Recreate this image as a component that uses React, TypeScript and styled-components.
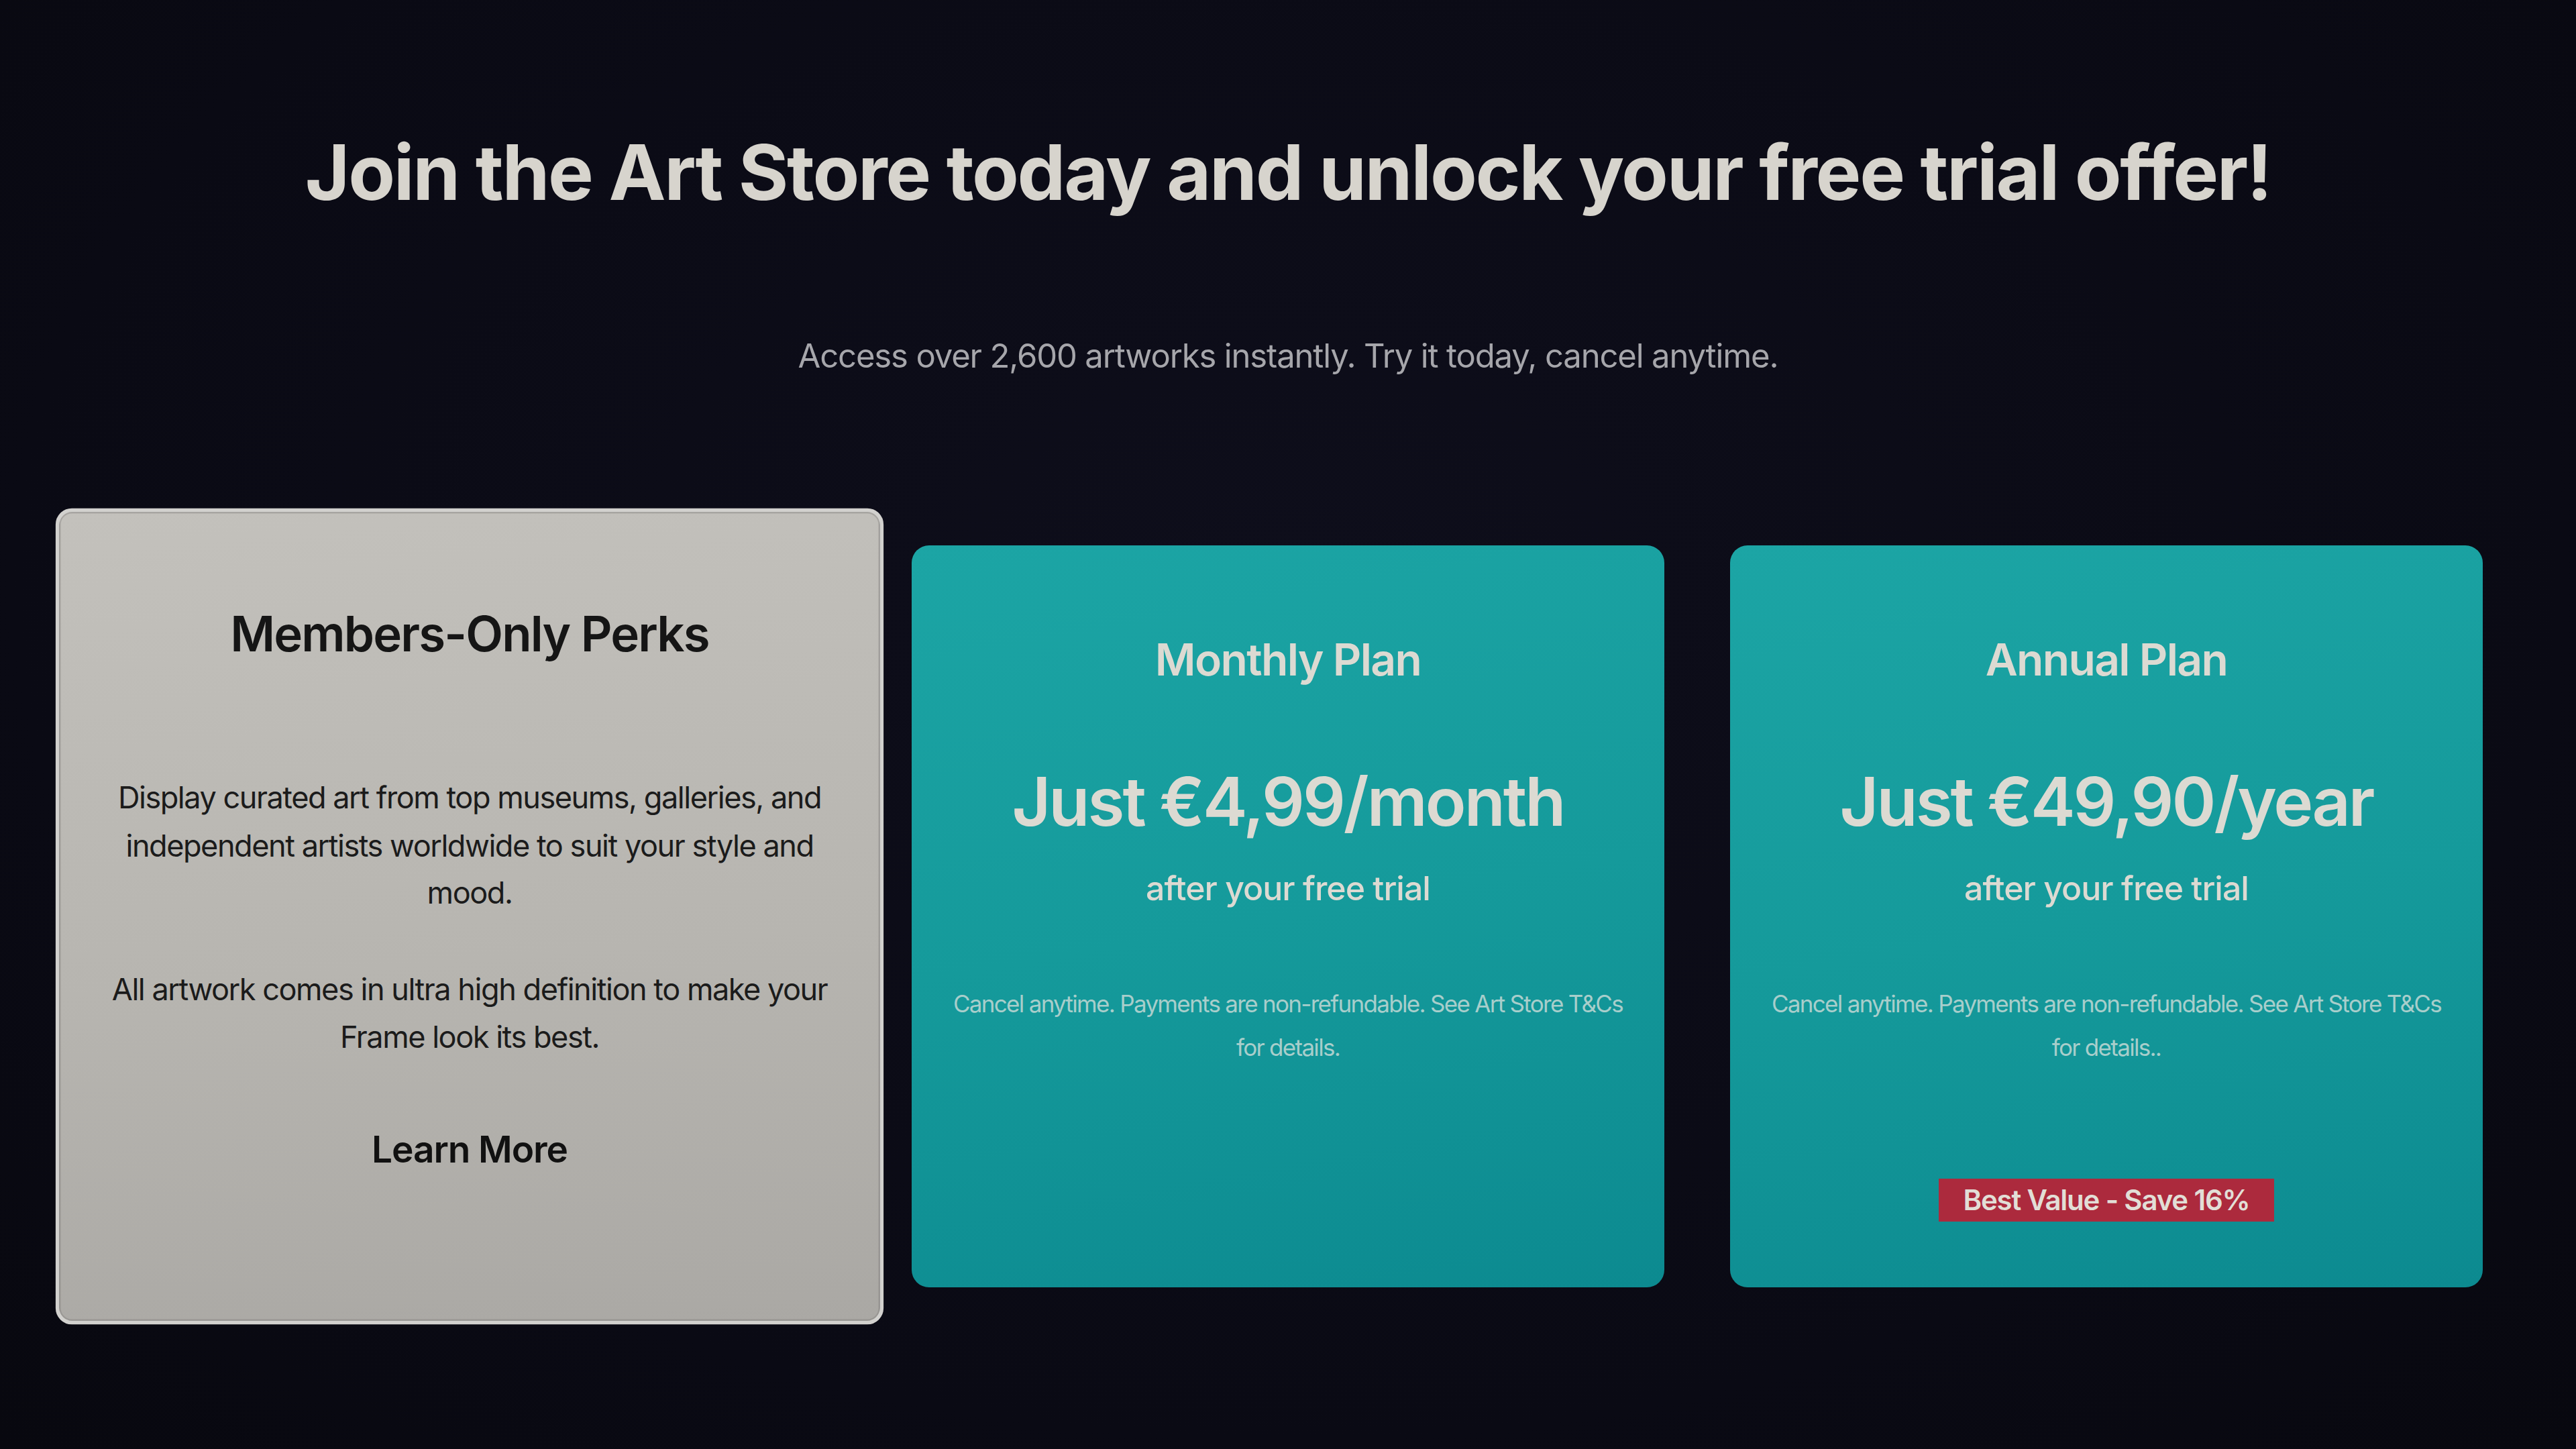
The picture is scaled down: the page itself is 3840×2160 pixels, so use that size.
import React from 'react';
import styled, { createGlobalStyle } from 'styled-components';

const GlobalStyle = createGlobalStyle`
  html, body {
    margin: 0;
    padding: 0;
    background: #0b0b16;
  }

  body {
    font-family: Inter, 'Noto Sans', 'Liberation Sans', sans-serif;
    -webkit-font-smoothing: antialiased;
  }
`;

const Page = styled.main`
  display: flex;
  flex-direction: column;
  align-items: center;
  min-height: 2160px;
  box-sizing: border-box;
  padding-top: 189px;
  background: radial-gradient(ellipse at 50% 40%, #0e0e1b 0%, #0a0a14 70%, #08080f 100%);
`;

const Headline = styled.h1`
  margin: 0;
  font-size: 114px;
  line-height: 1.2;
  font-weight: 700;
  color: #d7d4cd;
  letter-spacing: -2.3px;
`;

const Subline = styled.p`
  margin: 176px 0 0;
  font-size: 49px;
  line-height: 1.2;
  font-weight: 400;
  color: #a6a6ab;
  letter-spacing: -1.15px;
`;

const CardRow = styled.section`
  display: flex;
  align-items: center;
  justify-content: center;
  gap: 98px;
  margin-top: 252px;
`;

const Card = styled.div`
  display: flex;
  flex-direction: column;
  align-items: center;
  width: 1122px;
  height: 1106px;
  box-sizing: border-box;
  padding: 131px 48px 98px;
  border-radius: 26px;
  text-align: center;
  background: linear-gradient(170deg, #1ca5a5 0%, #159a9b 50%, #0c8a90 100%);
  color: #dcdad2;
`;

const PerksCard = styled(Card)`
  padding: 126px 58px 98px;
  border: 5px solid #d2d1ce;
  border-radius: 22px;
  background: linear-gradient(175deg, #c3c1bc 0%, #b7b5b0 55%, #aaa8a4 100%);
  box-shadow: inset 0 0 0 2px rgba(120, 118, 114, 0.35);
  color: #151515;
  transform: scale(1.1);
`;

const CardTitle = styled.h2`
  margin: 0;
  font-size: 66px;
  line-height: 1.2;
  font-weight: 600;
  letter-spacing: -1.7px;
  color: inherit;
`;

const Body = styled.p`
  margin: 150px 0 0;
  font-size: 41px;
  line-height: 64.5px;
  font-weight: 400;
  letter-spacing: -1.35px;
  color: #1b1b1b;

  & + & {
    margin-top: 66px;
  }
`;

const LearnMore = styled.span`
  margin-top: 90px;
  font-size: 50px;
  line-height: 1.2;
  font-weight: 600;
  letter-spacing: -1px;
  color: #111;
`;

const Price = styled.div`
  margin-top: 112px;
  font-size: 100px;
  line-height: 1.2;
  font-weight: 600;
  letter-spacing: -3px;
`;

const AfterTrial = styled.div`
  margin-top: 39px;
  font-size: 50px;
  line-height: 1.2;
  font-weight: 500;
  letter-spacing: -1px;
`;

const FinePrint = styled.p`
  margin: 110px 0 0;
  font-size: 35px;
  line-height: 65px;
  font-weight: 400;
  letter-spacing: -1.7px;
  color: #a8cecb;
`;

const Badge = styled.span`
  margin-top: auto;
  padding: 0 36px;
  height: 64px;
  line-height: 64px;
  font-size: 42px;
  font-weight: 600;
  letter-spacing: -1.2px;
  color: #e2ded6;
  background: #ac2a3d;
`;

interface Plan {
  name: string;
  price: string;
  terms: string;
  badge?: string;
}

const plans: Plan[] = [
  {
    name: 'Monthly Plan',
    price: 'Just €4,99/month',
    terms: 'Cancel anytime. Payments are non-refundable. See Art Store T&Cs for details.',
  },
  {
    name: 'Annual Plan',
    price: 'Just €49,90/year',
    terms: 'Cancel anytime. Payments are non-refundable. See Art Store T&Cs for details..',
    badge: 'Best Value - Save 16%',
  },
];

const PlanCard = ({ plan }: { plan: Plan }) => (
  <Card>
    <CardTitle>{plan.name}</CardTitle>
    <Price>{plan.price}</Price>
    <AfterTrial>after your free trial</AfterTrial>
    <FinePrint>{plan.terms}</FinePrint>
    {plan.badge && <Badge>{plan.badge}</Badge>}
  </Card>
);

export default function App() {
  return (
    <>
      <GlobalStyle />
      <Page>
        <Headline>Join the Art Store today and unlock your free trial offer!</Headline>
        <Subline>Access over 2,600 artworks instantly. Try it today, cancel anytime.</Subline>
        <CardRow>
          <PerksCard>
            <CardTitle>Members-Only Perks</CardTitle>
            <Body>
              Display curated art from top museums, galleries, and independent artists worldwide
              to suit your style and mood.
            </Body>
            <Body>All artwork comes in ultra high definition to make your Frame look its best.</Body>
            <LearnMore>Learn More</LearnMore>
          </PerksCard>
          {plans.map((plan) => (
            <PlanCard key={plan.name} plan={plan} />
          ))}
        </CardRow>
      </Page>
    </>
  );
}
